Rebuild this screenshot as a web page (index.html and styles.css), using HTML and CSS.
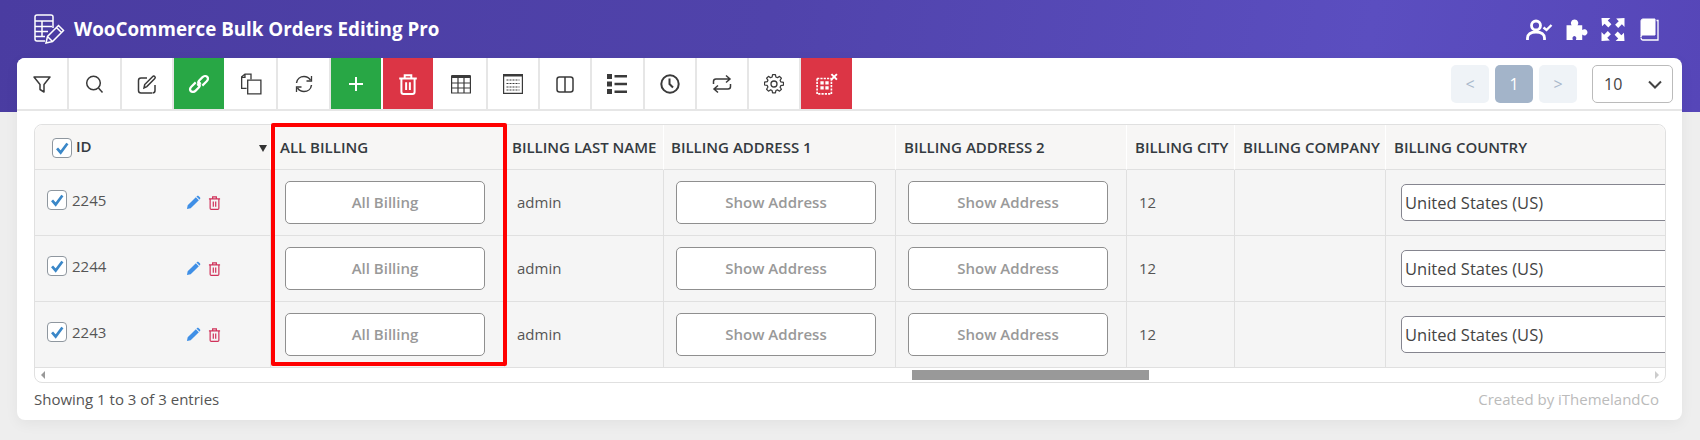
FILE: index.html
```html
<!DOCTYPE html>
<html lang="en">
  <head>
    <meta charset="UTF-8" />
    <meta name="viewport" content="width=device-width, initial-scale=1.0" />
    <title>WooCommerce Bulk Orders Editing Pro</title>
    <link rel="stylesheet" href="styles.css">
  </head>
  <body>
    <svg class="sprite" aria-hidden="true">
      <symbol id="check" viewBox="0 0 20 20"><path d="M4.5 10.5l4 4.5 7.5-10" fill="none" stroke="#3a87c8" stroke-width="3"/></symbol>
      <symbol id="pencil" viewBox="0 0 16 16"><path d="M1 15l.8-4L10.500 2.300l3.200 3.200L5 14.200zM11.600 1.200c.6-.6 1.400-.6 2 0l1.200 1.200c.6.6.6 1.400 0 2l-.5.5-3.200-3.200z" fill="#3f8fe6"/></symbol>
      <symbol id="bin" viewBox="0 0 14 16"><path d="M1 3.500h12M5 3.300V1.500h4v1.800M2.300 3.500v10.200c0 .7.500 1.200 1.200 1.200h7c.7 0 1.200-.5 1.200-1.200V3.500M5.700 6.500v5.500M8.300 6.500v5.500" fill="none" stroke="#d0325a" stroke-width="1.300"/></symbol>
    </svg>

    <header class="top-bar">
      <div class="brand">
        <svg class="brand-logo" viewBox="0 0 32 32" fill="none" stroke="#fff" stroke-width="1.500">
          <path d="M19 15V4c0-1.300-.7-2-2-2H3C1.700 2 1 2.700 1 4v22c0 1.300.7 2 2 2h8"/>
          <path d="M1 8h18M1 13.500h17M1 18.500h13M1 23.500h10M8 8v15"/>
          <path d="M12 30l1.500-6.500L24.500 12.500l5 5L18.500 28.500zM13.500 23.500l5 5M22.500 14.500l5 5"/>
        </svg>
        <span class="brand-name">WooCommerce Bulk Orders Editing Pro</span>
      </div>
      <div class="top-icons">
        <svg width="27" height="22" viewBox="0 0 27 22" fill="none" stroke="#fff" stroke-width="2.800"><circle cx="10" cy="6.500" r="4.500"/><path d="M1.500 21v-2c0-3.500 3-6 8.500-6s8.500 2.500 8.500 6v2"/><path d="M17.500 8.500l3 2.500 5-5" stroke-width="2.400"/></svg>
        <svg width="24" height="23" viewBox="0 0 22 22" fill="#fff"><path d="M1 7h5c-1-1.200-1-2.500-.5-3.500C6 2.200 7.300 1.500 8.700 1.500s2.700.7 3.200 2c.5 1 .5 2.300-.5 3.500h4.600v4.500c1.200-1 2.400-1 3.300-.5 1.100.6 1.700 1.500 1.700 2.700s-.6 2.200-1.700 2.700c-.9.500-2.100.5-3.300-.5V21H10c.8-1.500.3-3.700-1.500-3.700S6.300 19.500 7 21H1z"/></svg>
        <svg width="24" height="23" viewBox="0 0 22 22" fill="#fff"><path d="M0 0h8.500L6 2.500l3.500 3.500-3 3L3 5.500.5 8zM22 0v8.500L19.500 6 16 9.500l-3-3L16.500 3 14 .5zM0 22v-8.500L2.500 16 6 12.500l3 3L5.500 19 8 21.500zM22 22h-8.500l2.500-2.500-3.500-3.500 3-3 3.500 3.500 2.500-2.500z"/></svg>
        <svg class="book" width="19" height="23" viewBox="0 0 19 23" fill="none" stroke="#fff"><path d="M1 19V3c0-1.200.8-2 2-2h12v16H3c-1.200 0-2 .8-2 2z" fill="#fff"/><path d="M16.500 2.500H18V22H3c-1.200 0-2-1-2-2.500" stroke-width="1.300"/><path d="M3 19.500h13.500" stroke="#5a4dbb"/></svg>
      </div>
    </header>

    <main class="card">
      <div class="toolbar">
        <div class="tool-group">
          <button class="tool">
            <svg viewBox="0 0 20 20" fill="none" stroke="#3a3a3a" stroke-width="1.500"><path d="M2 3h16l-6 7.500V18l-4-2.500v-5z" stroke-linejoin="round"/></svg>
          </button>
          <button class="tool">
            <svg viewBox="0 0 20 20" fill="none" stroke="#3a3a3a" stroke-width="1.500"><circle cx="9.500" cy="9" r="6.800"/><path d="M14.500 14l4 4.500"/></svg>
          </button>
          <button class="tool">
            <svg viewBox="0 0 20 20" fill="none" stroke="#3a3a3a" stroke-width="1.500"><path d="M15 19H4c-1.500 0-2.500-1-2.500-2.500v-10C1.500 5 2.500 4 4 4h6M18 11v5.500c0 1.500-1 2.500-2.500 2.500"/><path d="M7 14l.7-3.500L15.500 2.700c.8-.8 1.700-.8 2.300-.2s.6 1.500-.2 2.300L9.800 12.600z"/></svg>
          </button>
          <button class="tool tool-green">
            <svg class="wide" viewBox="0 0 20 20" fill="none" stroke="#fff" stroke-width="2"><path d="M8.500 11.500l3-3M7 8.500l-4 4c-1.500 1.500-1.500 3 -.5 4s3 1 4.500-.5l3-3c1-1.200 1-2.800 0-3.500M13 11.500l4-4c1.500-1.500 1.500-3 .5-4s-3-1-4.500.5l-3 3c-1 1.200-1 2.800 0 3.500"/></svg>
          </button>
          <button class="tool">
            <svg class="wide" viewBox="0 0 20 20" fill="none" stroke="#3a3a3a" stroke-width="1.200"><path d="M6 14H1.500V3.500L4.500 1H10v5M1.500 4h3V1"/><path d="M7 6.500h12V19H7z"/></svg>
          </button>
          <button class="tool">
            <svg viewBox="0 0 20 20" fill="none" stroke="#3a3a3a" stroke-width="1.500"><path d="M2.500 9c.5-4 3.700-6.500 7.500-6.500 2.800 0 5 1.300 6.500 3.500M17.500 11c-.5 4-3.700 6.500-7.500 6.500-2.800 0-5-1.300-6.500-3.500"/><path d="M17.500 2v5h-5M2.500 18v-5h5" stroke-width="1.300"/></svg>
          </button>
          <button class="tool tool-green">
            <svg viewBox="0 0 20 20" fill="none" stroke="#fff" stroke-width="2"><path d="M10 3v14M3 10h14"/></svg>
          </button>
          <button class="tool tool-red">
            <svg class="wide" viewBox="0 0 20 20" fill="none" stroke="#fff" stroke-width="1.800"><path d="M2 5h16M7 5V2h6v3M4 5v12c0 1 .7 2 2 2h8c1.300 0 2-1 2-2V5M8.300 8.500v7M11.700 8.500v7"/></svg>
          </button>
          <button class="tool">
            <svg viewBox="0 0 20 20" fill="none" stroke="#3a3a3a" stroke-width="1.200"><path d="M.6 2h18.800v17H.6z"/><path d="M.6 2.500h18.800" stroke-width="3"/><path d="M.6 9h18.800M.6 14h18.800M7 3v16M13 3v16"/></svg>
          </button>
          <button class="tool">
            <svg viewBox="0 0 20 20" fill="none" stroke="#3a3a3a" stroke-width="1.200"><path d="M.6.600h18.800v18.800H.6z"/><path d="M.6 1.500h18.800" stroke-width="2"/><path d="M3.500 6h13M3.500 9.500h13M3.500 13h13M3.500 16h13" stroke-dasharray="2 1"/></svg>
          </button>
          <button class="tool">
            <svg viewBox="0 0 20 20" fill="none" stroke="#3a3a3a" stroke-width="1.500"><rect x="2" y="3" width="16" height="15" rx="2.500"/><path d="M10 3v15"/></svg>
          </button>
          <button class="tool">
            <svg viewBox="0 0 20 20" fill="#3a3a3a"><path d="M0 0h5v5H0zM0 7.500h5v5H0zM0 15h5v5H0zM7.500 1h12.500v2.500H7.500zM7.500 8.700h12.500v2.500H7.500zM7.500 16.500h12.500V19H7.500z"/></svg>
          </button>
          <button class="tool">
            <svg viewBox="0 0 20 20" fill="none" stroke="#3a3a3a" stroke-width="2"><circle cx="10" cy="10" r="8.700"/><path d="M9.500 4.500v5.500l3.500 3.500"/></svg>
          </button>
          <button class="tool">
            <svg viewBox="0 0 20 20" fill="none" stroke="#3a3a3a" stroke-width="1.500"><path d="M1.500 10V7.500C1.500 6 2.500 5 4 5h14M14 1.500L18 5l-4 3.500M18.500 10v2.500c0 1.500-1 2.500-2.500 2.500H2M6 11.500L2 15l4 3.500"/></svg>
          </button>
          <button class="tool">
            <svg viewBox="0 0 20 20" fill="none" stroke="#3a3a3a" stroke-width="1.300"><circle cx="10" cy="10" r="3"/><path d="M8.500 1h3l.5 2.500 1.600.7L15.800 2.800l2 2-1.400 2.200.7 1.600 2.900.5v3l-2.900.5-.7 1.600 1.400 2.200-2 2-2.200-1.400-1.600.7-.5 2.500h-3l-.5-2.500-1.600-.7-2.200 1.400-2-2L3.600 14l-.7-1.600L0 11.900v-3l2.900-.5.7-1.600L2.200 4.800l2-2 2.200 1.400 1.600-.7z" stroke-linejoin="round" transform="translate(.500 -.3) scale(.95)"/></svg>
          </button>
          <button class="tool tool-red">
            <svg class="wide" viewBox="0 0 20 20" fill="none" stroke="#fff" stroke-width="1.500"><path d="M1 5h13M1 5v14h13V5M1 5" stroke-dasharray="2 1"/><path d="M14 1l5 5M19 1l-5 5" stroke-width="1.800"/><path d="M4 7.500h3v3H4zM8.500 7.500h3v3h-3zM4 12h3v3H4zM8.500 12h3v3h-3z" fill="#fff" stroke="none"/></svg>
          </button>
        </div>
        <div class="pager">
          <span class="page-btn">&lt;</span>
          <span class="page-btn active">1</span>
          <span class="page-btn">&gt;</span>
          <div class="page-size">
            <span>10</span>
            <svg width="14" height="9" viewBox="0 0 14 9" fill="none" stroke="#444" stroke-width="2"><path d="M1 1.500l6 6 6-6"/></svg>
          </div>
        </div>
      </div>

      <div class="table-wrap">
        <div class="highlight"></div>
        <div class="table-clip">
          <table class="orders">
            <colgroup>
              <col class="c-id" /><col class="c-all" /><col class="c-last" /><col class="c-addr1" />
              <col class="c-addr2" /><col class="c-city" /><col class="c-company" /><col class="c-country" />
            </colgroup>
            <thead>
              <tr>
                <th class="th-id">
                  <span class="check"><svg><use href="#check" /></svg></span>
                  <span>ID</span>
                  <span class="sort-arrow"></span>
                </th>
                <th class="th-all">ALL BILLING</th>
                <th class="th-tight">BILLING LAST NAME</th>
                <th class="th-tight">BILLING ADDRESS 1</th>
                <th>BILLING ADDRESS 2</th>
                <th>BILLING CITY</th>
                <th>BILLING COMPANY</th>
                <th>BILLING COUNTRY</th>
              </tr>
            </thead>
            <tbody>
              <tr>
                <td class="td-id">
                  <div class="id-cell">
                    <span class="check"><svg><use href="#check" /></svg></span>
                    <span class="id-num">2245</span>
                    <span class="row-actions">
                      <svg class="ic-pencil"><use href="#pencil" /></svg>
                      <svg class="ic-bin"><use href="#bin" /></svg>
                    </span>
                  </div>
                </td>
                <td class="td-btn td-all"><button class="cell-btn">All Billing</button></td>
                <td class="td-text">admin</td>
                <td class="td-btn"><button class="cell-btn">Show Address</button></td>
                <td class="td-btn"><button class="cell-btn">Show Address</button></td>
                <td class="td-text">12</td>
                <td></td>
                <td class="td-country"><div class="country">United States (US)</div></td>
              </tr>
              <tr>
                <td class="td-id">
                  <div class="id-cell">
                    <span class="check"><svg><use href="#check" /></svg></span>
                    <span class="id-num">2244</span>
                    <span class="row-actions">
                      <svg class="ic-pencil"><use href="#pencil" /></svg>
                      <svg class="ic-bin"><use href="#bin" /></svg>
                    </span>
                  </div>
                </td>
                <td class="td-btn td-all"><button class="cell-btn">All Billing</button></td>
                <td class="td-text">admin</td>
                <td class="td-btn"><button class="cell-btn">Show Address</button></td>
                <td class="td-btn"><button class="cell-btn">Show Address</button></td>
                <td class="td-text">12</td>
                <td></td>
                <td class="td-country"><div class="country">United States (US)</div></td>
              </tr>
              <tr>
                <td class="td-id">
                  <div class="id-cell">
                    <span class="check"><svg><use href="#check" /></svg></span>
                    <span class="id-num">2243</span>
                    <span class="row-actions">
                      <svg class="ic-pencil"><use href="#pencil" /></svg>
                      <svg class="ic-bin"><use href="#bin" /></svg>
                    </span>
                  </div>
                </td>
                <td class="td-btn td-all"><button class="cell-btn">All Billing</button></td>
                <td class="td-text">admin</td>
                <td class="td-btn"><button class="cell-btn">Show Address</button></td>
                <td class="td-btn"><button class="cell-btn">Show Address</button></td>
                <td class="td-text">12</td>
                <td></td>
                <td class="td-country"><div class="country">United States (US)</div></td>
              </tr>
            </tbody>
          </table>
        </div>
        <div class="scrollbar">
          <span class="arrow-left"></span>
          <div class="scroll-track"><div class="scroll-thumb"></div></div>
          <span class="arrow-right"></span>
        </div>
      </div>

      <div class="card-foot">
        <span class="entries">Showing 1 to 3 of 3 entries</span>
        <span class="credit">Created by iThemelandCo</span>
      </div>
    </main>
  </body>
</html>
```

FILE: styles.css
```css
:root {
  --green: #28a745;
  --red: #dc3545;
  --line: #e0e0e0;
  --head-text: #343a40;
  --body-text: #555;
}
body {
  margin: 0;
  height: 440px;
  overflow: hidden;
  background-color: #eeeeee;
  font-family: "Open Sans", sans-serif;
  font-size: 15px;
  color: var(--body-text);
}
.sprite {
  display: none;
}
.top-bar {
  height: 112px;
  box-sizing: border-box;
  padding: 13px 41px 0 34px;
  display: flex;
  justify-content: space-between;
  align-items: flex-start;
  background: linear-gradient(100deg, #4a3ca1 0%, #5043ab 45%, #5b4ec0 80%, #5646b8 100%);
}
.brand {
  display: flex;
  align-items: center;
  gap: 8px;
}
.brand-logo {
  width: 32px;
  height: 32px;
}
.brand-name {
  color: #fff;
  font-size: 18.8px;
  font-weight: 700;
}
.top-icons {
  display: flex;
  align-items: center;
  gap: 12px;
  padding-top: 5px;
}
.book {
  margin-left: 3px;
}
.card {
  position: relative;
  width: 1665px;
  height: 362px;
  margin: -54px 0 0 17px;
  background: #fff;
  border-radius: 8px;
  box-shadow: 0 4px 14px rgba(0, 0, 0, 0.05);
}
.toolbar {
  display: flex;
  justify-content: space-between;
  height: 53px;
  box-sizing: border-box;
  border-bottom: 2px solid #e6e6e6;
}
.tool-group {
  display: flex;
}
.tool {
  width: 52.3px;
  height: 51px;
  padding: 0;
  display: flex;
  align-items: center;
  justify-content: center;
  background: #fff;
  border: none;
  border-right: 2px solid #e6e6e6;
}
.tool:first-child {
  border-top-left-radius: 8px;
}
.tool svg {
  width: 20px;
  height: 20px;
}
.tool svg.wide {
  width: 22px;
  height: 22px;
}
.tool-green {
  background-color: var(--green);
  border-right-color: #fff;
}
.tool-red {
  background-color: var(--red);
  border-right-color: #fff;
}
.pager {
  display: flex;
  align-items: flex-start;
  gap: 6px;
  padding: 7px 9px 0 0;
}
.page-btn {
  width: 38px;
  height: 38px;
  display: flex;
  align-items: center;
  justify-content: center;
  background-color: #eff3f7;
  border-radius: 5px;
  color: #a9b8cb;
  font-size: 16px;
}
.page-btn.active {
  background-color: #a3b4c9;
  color: #fff;
}
.page-size {
  width: 81px;
  height: 38px;
  margin-left: 9px;
  padding: 0 10px 0 11px;
  box-sizing: border-box;
  display: flex;
  align-items: center;
  justify-content: space-between;
  border: 1px solid #bbb;
  border-radius: 5px;
  font-size: 16px;
  color: #444;
}
.table-wrap {
  position: relative;
  width: 1632px;
  margin: 13px 0 0 17px;
  box-sizing: border-box;
  border: 1px solid var(--line);
  border-radius: 8px;
}
.highlight {
  position: absolute;
  left: 236px;
  top: -2px;
  width: 228px;
  height: 235px;
  border: 4px solid #f00;
  border-radius: 2px;
  z-index: 2;
}
.table-clip {
  overflow: hidden;
  border-radius: 8px 8px 0 0;
}
.orders {
  table-layout: fixed;
  width: 1751px;
  border-collapse: separate;
  border-spacing: 0;
}
.c-id { width: 236px; }
.c-all { width: 234px; }
.c-last { width: 159px; }
.c-addr1 { width: 232px; }
.c-addr2 { width: 231px; }
.c-city { width: 108px; }
.c-company { width: 151px; }
.c-country { width: 400px; }
.orders th {
  height: 44px;
  padding: 0 0 0 8px;
  box-sizing: content-box;
  text-align: left;
  font-size: 15px;
  font-weight: 600;
  color: var(--head-text);
  background-color: #f7f6f5;
  border-right: 1px solid #fff;
  border-bottom: 1px solid var(--line);
  white-space: nowrap;
}
.orders th.th-id {
  padding-left: 17px;
  position: relative;
}
.orders th.th-all {
  padding-left: 9px;
}
.orders th.th-tight {
  padding-left: 7px;
}
.orders td {
  height: 66px;
  padding: 0;
  box-sizing: border-box;
  background-color: #f5f5f5;
  border-right: 1px solid var(--line);
  border-bottom: 1px solid var(--line);
}
.orders tr:last-child td {
  height: 65.5px;
}
.check {
  display: inline-block;
  width: 18px;
  height: 18px;
  vertical-align: middle;
  border: 1px solid #8f979f;
  border-radius: 4px;
  background: #fff;
}
.check svg {
  display: block;
  width: 18px;
  height: 18px;
}
.sort-arrow {
  position: absolute;
  right: 3px;
  top: 20px;
  border-top: 7px solid #333;
  border-left: 4.5px solid transparent;
  border-right: 4.5px solid transparent;
}
.id-cell {
  display: flex;
  align-items: flex-start;
  height: 65px;
  padding: 20px 0 0 12px;
  box-sizing: border-box;
}
.id-num {
  margin-left: 5px;
  line-height: 20px;
}
.row-actions {
  display: flex;
  gap: 7px;
  margin-left: 80px;
  padding-top: 5px;
}
.ic-pencil {
  width: 15px;
  height: 15px;
}
.ic-bin {
  width: 13px;
  height: 16px;
}
.orders .td-text {
  padding: 0 0 2px 12px;
}
.orders .td-btn {
  padding-left: 12px;
}
.orders .td-all {
  padding-left: 14px;
}
.cell-btn {
  display: block;
  width: 200px;
  height: 43px;
  padding: 0 0 2px;
  background: #fff;
  border: 1px solid #8f8f8f;
  border-radius: 5px;
  font-family: "Open Sans", sans-serif;
  font-size: 15px;
  font-weight: 600;
  color: #999;
}
.orders .td-country {
  padding-left: 15px;
}
.country {
  height: 37px;
  box-sizing: border-box;
  padding-left: 3px;
  line-height: 35px;
  background: #fff;
  border: 1px solid #85858f;
  border-radius: 5px;
  font-size: 16.5px;
  color: #444;
}
.scrollbar {
  display: flex;
  align-items: center;
  height: 14px;
  padding: 0 6px;
}
.arrow-left {
  border-right: 4px solid #999;
  border-top: 4px solid transparent;
  border-bottom: 4px solid transparent;
}
.arrow-right {
  border-left: 4px solid #ccc;
  border-top: 4px solid transparent;
  border-bottom: 4px solid transparent;
}
.scroll-track {
  flex: 1;
  padding-left: 867px;
}
.scroll-thumb {
  width: 237px;
  height: 10px;
  background-color: #999;
}
.card-foot {
  display: flex;
  justify-content: space-between;
  padding: 6px 23px 0 17px;
}
.credit {
  color: #bbb;
}
```
